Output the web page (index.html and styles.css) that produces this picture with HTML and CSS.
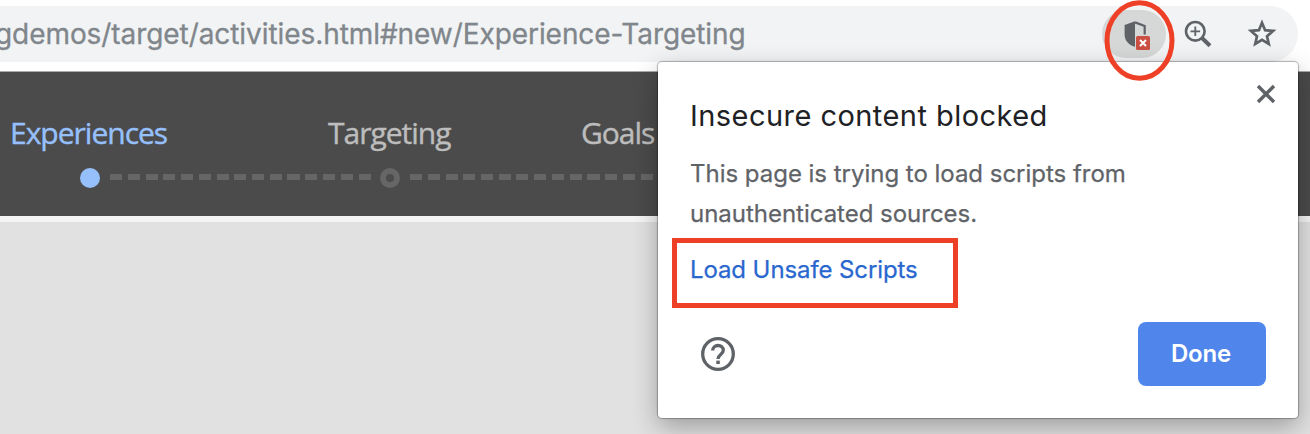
FILE: index.html
```html
<!DOCTYPE html>
<html lang="en">
<head>
<meta charset="utf-8">
<title>Experience Targeting</title>
<link rel="stylesheet" href="styles.css">
</head>
<body>
<header class="toolbar">
  <div class="omnibox">
    <span class="url">gdemos/target/activities.html#new/Experience-Targeting</span>
    <div class="actions">
      <span class="shield">
        <svg width="64" height="48" viewBox="0 0 64 48">
          <path d="M33 11.2 22.6 15v9.4c0 6 4 10.2 9.4 12.1l1 .3z" fill="#5f6368"/>
          <path d="M33 12.4 42.7 16v8.5" fill="none" stroke="#5f6368" stroke-width="2.2"/>
          <rect x="34" y="26" width="14" height="14" rx="1.5" fill="#cb5043"/>
          <path d="m38 30 6 6m0-6-6 6" stroke="#fff" stroke-width="2"/>
        </svg>
      </span>
      <svg class="zoom-icon" width="30" height="30" viewBox="0 0 30 30" fill="none" stroke="#5f6368">
        <circle cx="12.3" cy="12.3" r="9.3" stroke-width="2.6"/>
        <path d="M12.3 7.5v9.600M7.500 12.300h9.600" stroke-width="1.800"/>
        <path d="m19 19 8 7.700" stroke-width="4"/>
      </svg>
      <svg class="star-icon" width="30" height="30" viewBox="0 0 30 30">
        <path d="m15 3.800 3.100 7.400 8 .7-6.100 5.300 1.800 7.800-6.800-4.100L8.200 25l1.800-7.800-6.100-5.300 8-.7z" fill="none" stroke="#5f6368" stroke-width="2.700"/>
      </svg>
    </div>
  </div>
</header>
<nav class="steps">
  <div class="step active"><span class="label experiences">Experiences</span><div class="track"><i class="dot"></i><i class="dashes"></i></div></div>
  <div class="step"><span class="label targeting">Targeting</span><div class="track"><i class="dot"></i><i class="dashes"></i></div></div>
  <div class="step"><span class="label goals">Goals</span></div>
</nav>
<main class="workspace"></main>
<section class="popover">
  <div class="popover-head">
    <h1>Insecure content blocked</h1>
    <svg class="close" width="20" height="20" viewBox="0 0 20 20"><path d="m2 2 16 16m0-16L2 18" stroke="#5f6368" stroke-width="3.400"/></svg>
  </div>
  <p>This page is trying to load scripts from<br>unauthenticated sources.</p>
  <a class="load">Load Unsafe Scripts</a>
  <div class="popover-foot">
    <svg width="36" height="36" viewBox="0 0 36 36" fill="none" stroke="#5f6368">
      <circle cx="18" cy="18" r="15.300" stroke-width="3.300"/>
      <path d="M12.700 14.600c0-3.200 2.400-5.100 5.300-5.100s5.300 2 5.300 4.800c0 4-5.300 4.300-5.300 8.600" stroke-width="3.300"/>
      <path d="M16.300 26.300h3.500" stroke-width="3.400"/>
    </svg>
    <button class="done">Done</button>
  </div>
</section>
<svg class="ring" width="72" height="82" viewBox="0 0 72 82"><ellipse cx="35.500" cy="40.500" rx="32.500" ry="37.800" fill="none" stroke="#ee4026" stroke-width="5"/></svg>
<div class="highlight"></div>
</body>
</html>
```
FILE: styles.css
```css
* { box-sizing: border-box; }
body { margin: 0; width: 1310px; height: 434px; overflow: hidden; position: relative; font-family: Inter, "Liberation Sans", sans-serif; background: #e1e1e1; }
.toolbar { height: 72px; padding: 6px 12px 0 0; background: #fff; border-bottom: 1px solid #a8acab; }
.omnibox { height: 56px; display: flex; align-items: center; justify-content: space-between; background: #f1f3f4; border-radius: 0 28px 28px 0; }
.url { margin-left: -5px; font-size: 28px; line-height: 56px; letter-spacing: -.07px; color: #80868b; white-space: nowrap; -webkit-text-stroke: .3px #80868b; }
.actions { display: flex; align-items: center; padding-right: 21px; }
.shield { width: 64px; height: 48px; border-radius: 24px; background: #d5d8d7; }
.shield svg { display: block; }
.zoom-icon { margin-left: 17px; }
.star-icon { margin-left: 34px; }
.steps { height: 150px; display: flex; background: #4b4b4b; border-bottom: 6px solid #f4f4f4; font-family: "Open Sans", sans-serif; }
.step { flex: 0 0 300px; min-width: 0; padding-top: 40px; color: #bdbdbd; }
.active { color: #96c0fc; }
.label { display: block; font-size: 30px; line-height: 41px; letter-spacing: -1px; white-space: nowrap; -webkit-text-stroke: .4px currentColor; }
.experiences { padding-left: 10px; }
.targeting { padding-left: 28px; }
.goals { margin-left: -19px; }
.track { display: flex; align-items: center; padding: 15px 0 0 80px; }
.dot { width: 20px; height: 20px; flex: none; border: 6px solid #666; border-radius: 50%; }
.active .dot { border: 0; background: #96c0fc; }
.dashes { flex: none; width: 261px; height: 6px; margin: -2px -71px 0 10px; background: repeating-linear-gradient(90deg, #666 0 12px, transparent 12px 17.75px); }
.popover { position: absolute; left: 658px; top: 62px; width: 640px; height: 356px; padding: 22px 32px 32px; background: #fff; border-radius: 4px; box-shadow: 0 0 1px 1px rgba(0,0,0,.28), 0 9px 26px rgba(0,0,0,.3); }
.popover-head { display: flex; justify-content: space-between; }
h1 { margin: 12px 0 0; font-size: 29px; line-height: 40px; font-weight: 400; color: #202124; white-space: nowrap; letter-spacing: .45px; }
.close { margin-right: -10px; }
p { margin: 18px 0 0; font-size: 24px; line-height: 40px; letter-spacing: -.02px; color: #5f6368; white-space: nowrap; -webkit-text-stroke: .25px #5f6368; }
.load { display: block; margin-top: 16px; font-size: 24px; line-height: 40px; letter-spacing: -.1px; color: #2967cf; -webkit-text-stroke: .25px #2967cf; }
.popover-foot { display: flex; align-items: center; justify-content: space-between; margin-top: 32px; padding-left: 10px; }
.done { width: 128px; height: 64px; padding: 0 2px 0 0; border: 0; border-radius: 8px; background: #5086ec; color: #fff; font: 600 24px/64px Inter, sans-serif; letter-spacing: -.2px; }
.ring { position: absolute; left: 1104px; top: 0; }
.highlight { position: absolute; left: 672px; top: 238px; width: 286px; height: 70px; border: 5px solid #ee4026; }
```
